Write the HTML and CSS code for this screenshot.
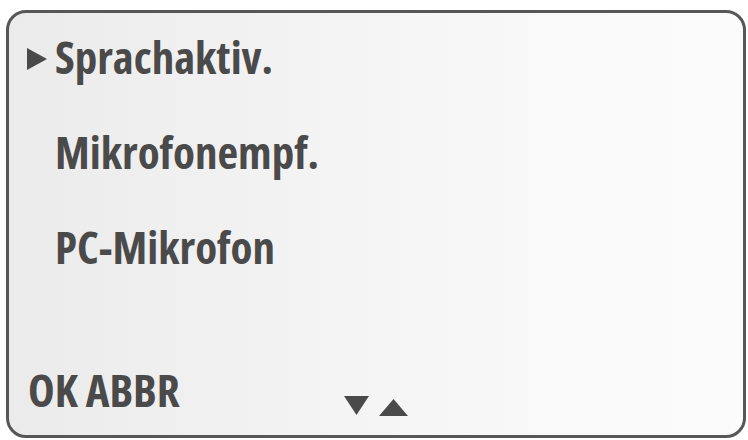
FILE: index.html
```html
<!DOCTYPE html>
<html lang="de">
<head>
<meta charset="utf-8">
<title>Menü</title>
<link rel="stylesheet" href="styles.css">
</head>
<body>
<div class="screen">
  <ul class="menu">
    <li class="item selected">
      <svg class="cursor" width="20" height="22" viewBox="0 0 20 22"><polygon points="0,0 20,11 0,22" fill="#4a4a4a"/></svg>
      <span class="label">Sprachaktiv.</span>
    </li>
    <li class="item">
      <span class="cursor-space"></span>
      <span class="label">Mikrofonempf.</span>
    </li>
    <li class="item">
      <span class="cursor-space"></span>
      <span class="label">PC-Mikrofon</span>
    </li>
  </ul>
  <div class="footer">
    <span class="softkeys">OK ABBR</span>
    <svg class="arrows" width="64" height="20" viewBox="0 0 64 20">
      <polygon points="0,0 25,0 12.5,19" fill="#4a4a4a"/>
      <polygon points="35,20 64,20 49.5,3" fill="#4a4a4a"/>
    </svg>
  </div>
</div>
</body>
</html>
```
FILE: styles.css
```css
html, body {
  margin: 0;
  padding: 0;
  background: #ffffff;
}
body {
  width: 748px;
  height: 440px;
  overflow: hidden;
  font-family: "Open Sans", "DejaVu Sans Condensed", sans-serif;
  font-stretch: 75%;
  font-weight: 700;
  color: #4a4a4a;
}
.screen {
  box-sizing: border-box;
  width: 740px;
  height: 428px;
  margin: 10px 0 0 6px;
  border: 3px solid #575757;
  border-radius: 20px;
  background: linear-gradient(90deg, #ebebeb 0%, #f3f3f3 40%, #f9f9f9 75%, #fbfbfb 100%);
  display: flex;
  flex-direction: column;
  padding: 19px 0 20px 0;
}
.menu {
  list-style: none;
  margin: 0;
  padding: 0;
  display: flex;
  flex-direction: column;
  gap: 45px;
}
.item {
  display: flex;
  align-items: center;
  gap: 8px;
  padding-left: 18px;
  font-size: 45px;
  line-height: 50px;
  height: 50px;
}
.cursor {
  display: block;
  flex: none;
  margin-top: 4px;
}
.cursor-space {
  display: block;
  width: 20px;
  flex: none;
}
.footer {
  margin-top: auto;
  display: flex;
  align-items: flex-end;
  padding-left: 19px;
  height: 50px;
}
.softkeys {
  display: block;
  width: 316px;
  flex: none;
  font-size: 45px;
  line-height: 50px;
}
.arrows {
  display: block;
  margin-bottom: -1px;
}
```
